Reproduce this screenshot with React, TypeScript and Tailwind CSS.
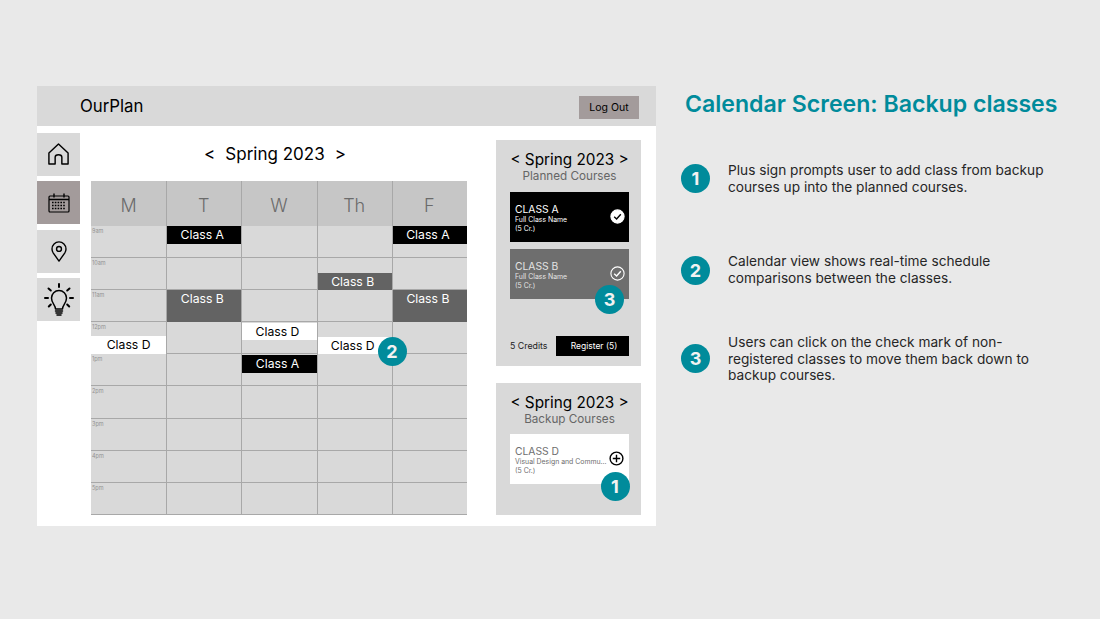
const days = ["M", "T", "W", "Th", "F"];
const hours = ["9am", "10am", "11am", "12pm", "1pm", "2pm", "3pm", "4pm", "5pm"];

type Ev = { label: string; top: string; h: string; color: string };

// event positions are per column, offset from the top of the 9am row
const events: Record<string, Ev[]> = {
  M: [{ label: "Class D", top: "top-[110px]", h: "h-[18px]", color: "bg-white text-black" }],
  T: [
    { label: "Class A", top: "top-0", h: "h-[17.5px]", color: "bg-black text-white" },
    { label: "Class B", top: "top-[64px]", h: "h-[32px]", color: "bg-[#636363] text-white" },
  ],
  W: [
    { label: "Class D", top: "top-[97px]", h: "h-[17px]", color: "bg-white text-black" },
    { label: "Class A", top: "top-[129px]", h: "h-[18px]", color: "bg-black text-white" },
  ],
  Th: [
    { label: "Class B", top: "top-[47px]", h: "h-[17px]", color: "bg-[#636363] text-white" },
    { label: "Class D", top: "top-[111px]", h: "h-[17px]", color: "bg-white text-black" },
  ],
  F: [
    { label: "Class A", top: "top-0", h: "h-[17.5px]", color: "bg-black text-white" },
    { label: "Class B", top: "top-[64px]", h: "h-[32px]", color: "bg-[#636363] text-white" },
  ],
};

const steps = [
  { n: 1, text: ["Plus sign prompts user to add class from backup", "courses up into the planned courses."], mt: "mt-[43px]" },
  { n: 2, text: ["Calendar view shows real-time schedule", "comparisons between the classes."], mt: "mt-[58px]" },
  { n: 3, text: ["Users can click on the check mark of non-", "registered classes to move them back down to", "backup courses."], mt: "mt-[47px]" },
];

const Badge = ({ n, className = "" }: { n: number; className?: string }) => (
  <div className={`w-[29px] h-[29px] rounded-full bg-[#008b9b] text-[#f2f2f2] flex items-center justify-center text-[18px] font-bold shrink-0 ${className}`}>
    {n}
  </div>
);

const HomeIcon = () => (
  <svg width="23" height="24" viewBox="0 0 24 24" fill="none" stroke="black" strokeWidth="1.5" strokeLinejoin="round">
    <path d="M2 11 L12 1.5 L22 11 V22.5 H15.5 V15.5 Q15.5 12.8 12 12.8 Q8.5 12.8 8.5 15.5 V22.5 H2 Z" />
  </svg>
);

const CalendarIcon = () => (
  <svg width="22" height="20" viewBox="0 0 22 20" fill="none" stroke="black" strokeWidth="1.2">
    <rect x="1" y="3" width="20" height="16" rx="1" />
    <path d="M1 6.5 H21 M6 0.5 V4.5 M16 0.5 V4.5" strokeWidth="1.4" />
    <path d="M4 9.5 H18 M4 12.5 H18 M4 15.5 H18" strokeWidth="1.6" strokeDasharray="1.6 1.2" />
  </svg>
);

const PinIcon = () => (
  <svg width="16" height="21" viewBox="0 0 18 24" fill="none" stroke="black" strokeWidth="1.6">
    <path d="M9 23 L2.5 13.8 Q1 11.5 1 9 A8 8 0 0 1 17 9 Q17 11.5 15.5 13.8 Z" strokeLinejoin="round" />
    <circle cx="9" cy="9" r="2.8" />
  </svg>
);

const BulbIcon = () => (
  <svg width="30" height="34" viewBox="0 0 30 34" fill="none" stroke="black" strokeWidth="1.5" strokeLinecap="round">
    <path d="M15 1 V4 M4.5 5.5 L6.8 7.5 M25.5 5.5 L23.2 7.5 M1 15 H4 M26 15 H29 M4.8 23.5 L6.8 21.5 M25.2 23.5 L23.2 21.5" strokeWidth="2" />
    <path d="M11.5 26 C11.5 22 7.5 20.5 7.5 15 A7.5 7.5 0 0 1 22.5 15 C22.5 20.5 18.5 22 18.5 26 Z" strokeLinejoin="round" />
    <path d="M11.5 28 H18.5 M12 30 H18 M13 32 H17" strokeWidth="1.5" />
  </svg>
);

const CheckCircle = ({ filled }: { filled: boolean }) => (
  <svg className="shrink-0 mr-[4px]" width="15" height="15" viewBox="0 0 15 15" fill={filled ? "white" : "none"} stroke="white" strokeWidth="1.1">
    <circle cx="7.5" cy="7.5" r="6.6" />
    <path d="M4.2 7.8 L6.6 10 L10.8 5.2" stroke={filled ? "black" : "white"} strokeWidth="1.4" fill="none" />
  </svg>
);

const PlusCircle = () => (
  <svg className="shrink-0 mr-[5px]" width="15" height="15" viewBox="0 0 15 15" fill="none" stroke="black" strokeWidth="1.4">
    <circle cx="7.5" cy="7.5" r="6.4" />
    <path d="M7.5 3.8 V11.2 M3.8 7.5 H11.2" />
  </svg>
);

const CourseCard = ({ code, name, tone, icon }: { code: string; name: string; tone: string; icon: React.ReactNode }) => (
  <div className={`w-[119px] h-[49.5px] pl-[5px] flex items-center justify-between ${tone}`}>
    <div className="flex flex-col pt-[2px]">
      <span className="text-[10.3px] leading-[12px]">{code}</span>
      <span className="text-[6.9px] leading-[9px] whitespace-nowrap">{name}</span>
      <span className="text-[6.9px] leading-[9px]">(5 Cr.)</span>
    </div>
    {icon}
  </div>
);

const SideButton = ({ active, children }: { active?: boolean; children: React.ReactNode }) => (
  <div className={`w-[43px] h-[43px] flex items-center justify-center ${active ? "bg-[#a39b9b]" : "bg-[#d9d9d9]"}`}>
    {children}
  </div>
);

const PanelHeader = ({ sub }: { sub: string }) => (
  <div className="-ml-[14px] w-[145px] pl-[2px] flex flex-col items-center">
    <span className="text-[15.3px] leading-[20px] text-black">&lt; Spring 2023 &gt;</span>
    <span className="text-[11.7px] leading-[13px] text-[#666666]">{sub}</span>
  </div>
);

export default function App() {
  return (
    <div className="w-[1100px] h-[619px] bg-[#e9e9e9] flex overflow-hidden font-['Inter',sans-serif] antialiased">
      {/* mock app */}
      <div className="relative w-[619px] h-[440px] ml-[37px] mt-[86px] bg-white flex flex-col">
        <div className="h-[40px] bg-[#d9d9d9] flex items-center justify-between pl-[43px] pr-[17px] shrink-0">
          <span className="text-[16.8px] text-black pt-[2px]">OurPlan</span>
          <div className="w-[60px] h-[23px] mt-[2px] pt-[1px] bg-[#a39b9b] flex items-center justify-center text-[10.5px] text-black">Log Out</div>
        </div>
        <div className="flex flex-1">
          <div className="w-[54px] flex flex-col gap-[5.5px] pt-[6.5px] shrink-0">
            <SideButton><HomeIcon /></SideButton>
            <SideButton active><CalendarIcon /></SideButton>
            <SideButton><PinIcon /></SideButton>
            <SideButton><BulbIcon /></SideButton>
          </div>

          <div className="w-[376px] shrink-0 flex flex-col">
            <div className="h-[55px] flex items-center justify-center gap-[10px] pr-[8px] text-[17px] text-black pt-[2px]">
              <span>&lt;</span>
              <span>Spring 2023</span>
              <span>&gt;</span>
            </div>
            <div className="grid grid-cols-5 w-[376px]">
              {days.map((d, i) => (
                <div key={d} className={`flex flex-col ${i > 0 ? "border-l border-[#a8a8a8]" : ""}`}>
                  <div className={`h-[45px] bg-[#c6c6c6] flex items-center justify-center pt-[4px] text-[18px] font-light text-[#6b6b6b] ${i > 0 ? "pr-[1px]" : ""}`}>{d}</div>
                  <div className="relative">
                    {hours.map((h) => (
                      <div key={h} className="h-[32.1px] bg-[#d9d9d9] border-b border-[#a8a8a8] pl-[1px] pt-[2px] text-[5.5px] leading-[7px] text-[#929292]">
                        {i === 0 ? h : ""}
                      </div>
                    ))}
                    {events[d].map((e) => (
                      <div key={e.label} className={`absolute left-0 right-0 ${e.top} ${e.h} ${e.color} flex justify-center pt-[1px] text-[12.2px] leading-[16px] ${i > 0 ? "pr-[4px]" : ""}`}>
                        {e.label}
                      </div>
                    ))}
                  </div>
                </div>
              ))}
            </div>
          </div>

          <div className="ml-[29px] w-[145px] pt-[14px] flex flex-col gap-[17px]">
            <div className="h-[226px] bg-[#d9d9d9] flex flex-col items-start pl-[14px] pt-[10px]">
              <PanelHeader sub="Planned Courses" />
              <div className="mt-[9px] flex flex-col gap-[7.5px]">
                <CourseCard code="CLASS A" name="Full Class Name" tone="bg-black text-white" icon={<CheckCircle filled />} />
                <CourseCard code="CLASS B" name="Full Class Name" tone="bg-[#6e6e6e] text-[#e4e4e4]" icon={<CheckCircle filled={false} />} />
              </div>
              <div className="mt-auto mb-[10px] w-[119px] flex items-center justify-between">
                <span className="text-[8.8px] text-[#222222]">5 Credits</span>
                <div className="w-[73px] h-[20px] bg-black text-white text-[8.5px] pl-[3px] flex items-center justify-center">Register (5)</div>
              </div>
            </div>
            <div className="h-[132px] bg-[#d9d9d9] flex flex-col items-start pl-[14px] pt-[10px]">
              <PanelHeader sub="Backup Courses" />
              <div className="mt-[8px]">
                <CourseCard code="CLASS D" name="Visual Design and Commu..." tone="bg-white text-[#6e6e6e]" icon={<PlusCircle />} />
              </div>
            </div>
          </div>
        </div>

        <Badge n={3} className="absolute left-[558px] top-[199px]" />
        <Badge n={2} className="absolute left-[340.5px] top-[250.5px]" />
        <Badge n={1} className="absolute left-[563.5px] top-[386px]" />
      </div>

      {/* explanation column */}
      <div className="ml-[29px] pt-[89px] flex flex-col">
        <h1 className="text-[23.1px] leading-[30px] font-semibold text-[#008b9b] whitespace-nowrap">Calendar Screen: Backup classes</h1>
        {steps.map((s) => (
          <div key={s.n} className={`flex items-center ${s.mt}`}>
            <Badge n={s.n} className="-ml-[4px]" />
            <div className="ml-[18px] flex flex-col text-[13.7px] leading-[16.7px] text-[#262626] whitespace-nowrap">
              {s.text.map((t) => (
                <span key={t}>{t}</span>
              ))}
            </div>
          </div>
        ))}
      </div>
    </div>
  );
}
